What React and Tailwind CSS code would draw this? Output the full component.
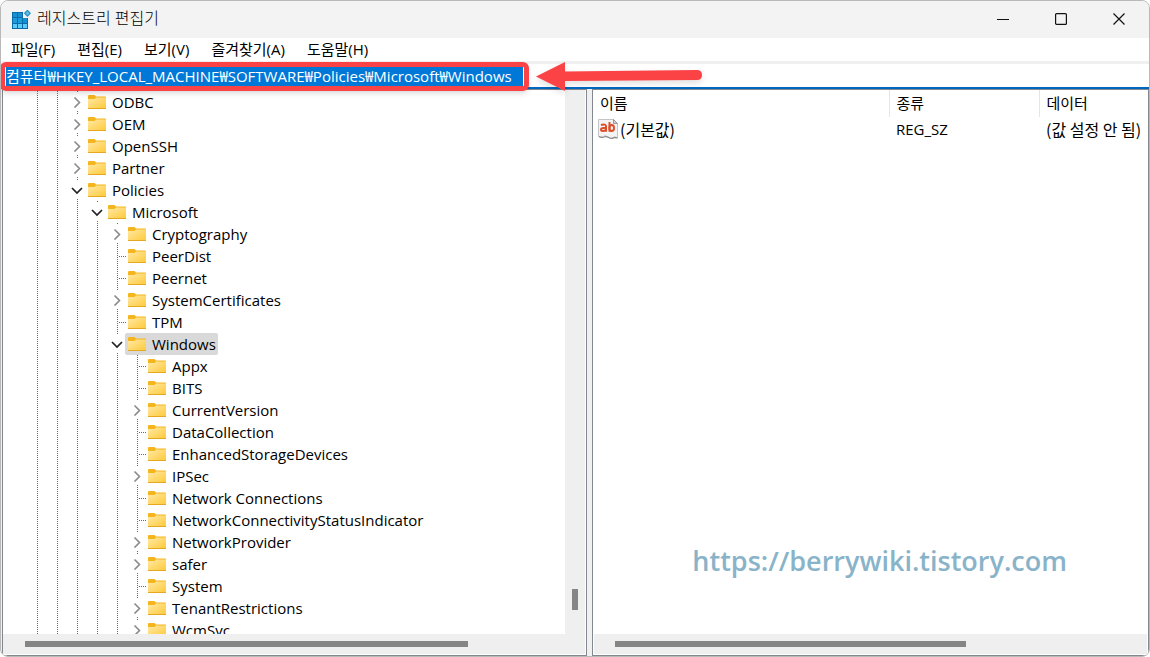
import { useState } from "react";

const MENUS = ["파일(F)", "편집(E)", "보기(V)", "즐겨찾기(A)", "도움말(H)"];

// depth = number of guide lines drawn left of the expander
const KEYS = [
  { name: "ODBC", depth: 2, state: "closed" },
  { name: "OEM", depth: 2, state: "closed" },
  { name: "OpenSSH", depth: 2, state: "closed" },
  { name: "Partner", depth: 2, state: "closed" },
  { name: "Policies", depth: 2, state: "open" },
  { name: "Microsoft", depth: 3, state: "open" },
  { name: "Cryptography", depth: 4, state: "closed" },
  { name: "PeerDist", depth: 4, state: "leaf" },
  { name: "Peernet", depth: 4, state: "leaf" },
  { name: "SystemCertificates", depth: 4, state: "closed" },
  { name: "TPM", depth: 4, state: "leaf" },
  { name: "Windows", depth: 4, state: "open" },
  { name: "Appx", depth: 5, state: "leaf" },
  { name: "BITS", depth: 5, state: "leaf" },
  { name: "CurrentVersion", depth: 5, state: "closed" },
  { name: "DataCollection", depth: 5, state: "leaf" },
  { name: "EnhancedStorageDevices", depth: 5, state: "leaf" },
  { name: "IPSec", depth: 5, state: "closed" },
  { name: "Network Connections", depth: 5, state: "leaf" },
  { name: "NetworkConnectivityStatusIndicator", depth: 5, state: "leaf" },
  { name: "NetworkProvider", depth: 5, state: "closed" },
  { name: "safer", depth: 5, state: "closed" },
  { name: "System", depth: 5, state: "leaf" },
  { name: "TenantRestrictions", depth: 5, state: "closed" },
  { name: "WcmSvc", depth: 5, state: "closed" },
];

function RegeditIcon() {
  return (
    <svg className="w-5 h-5" viewBox="0 0 20 20" aria-hidden="true">
      <path d="M1 2h11v6h5v11H1z" fill="#0b6aa8" />
      <path d="M2 3h4v4H2zM7 3h4v4H7z" fill="#1590d0" />
      <path d="M2 8h4v5H2zM7 8h4v5H7z" fill="#1c9cdc" />
      <path d="M12 8h4v5h-4z" fill="#1590d0" />
      <path d="M2 14h4v4H2zM7 14h4v4H7zM12 14h4v4h-4z" fill="#5ccbfa" />
      <path d="M16.500-.5l3.500 3.800-3.500 3.700-3.700-3.700z" fill="#2b8fc4" />
      <path d="M16.500 1.200l2 2-2 2-2-2z" fill="#5fbde6" />
    </svg>
  );
}

function FolderIcon() {
  return (
    <svg className="w-[18px] h-4 shrink-0" viewBox="0 0 18 16" aria-hidden="true">
      <defs>
        <linearGradient id="folder" x1="0" y1="0" x2="1" y2="1">
          <stop offset="0" stopColor="#ffe9a6" />
          <stop offset="1" stopColor="#ffca3a" />
        </linearGradient>
      </defs>
      <path d="M0 2Q0 1 1 1h5.500l1.500 1.500h9q1 0 1 1v2H0z" fill="#f5b51c" />
      <path d="M0 5h6.500L8 3.500h10v11H0z" fill="url(#folder)" />
      <path d="M0 14h18v1H0z" fill="#e5a822" />
    </svg>
  );
}

function StringValueIcon() {
  return (
    <svg className="w-5 h-5 shrink-0" viewBox="0 0 20 20" aria-hidden="true">
      <path
        d="M.5.500h15l4 4v14.500q-2.500-2-5 0t-5-1-4-.5-5 0z"
        fill="#f4f4f4"
        stroke="#c4c4c4"
      />
      <path d="M15.500.500v4h4z" fill="#d0d0d0" stroke="#9a9a9a" />
      <path d="M1 17.500q3 1.500 5 .5t5 .5 4 .5 4.500 0" fill="none" stroke="#8d8d8d" strokeWidth="1.300" />
      <g fill="none" stroke="#dd4f2b" strokeWidth="2">
        <path d="M3 6q5-1.500 5 1.500v5.300M8 9H5.500q-2.500 0-2.500 1.500T5 12q3 0 3-2" />
        <path d="M11.500 3v9.800" />
        <ellipse cx="13.700" cy="9" rx="2.300" ry="2.900" />
      </g>
    </svg>
  );
}

function Chevron({ open }) {
  return (
    <svg className="w-3 h-3" viewBox="0 0 12 12" fill="none" aria-hidden="true">
      {open ? (
        <path d="M1 4l5 5 5-5" stroke="#222" strokeWidth="1.700" />
      ) : (
        <path d="M3.500 1.500l5 5-5 5" stroke="#8a8a8a" strokeWidth="1.600" />
      )}
    </svg>
  );
}

function VLine({ className }) {
  return (
    <span
      className={`w-px bg-[linear-gradient(#6b6b6b_50%,transparent_50%)] bg-[length:1px_2px] ${className}`}
    />
  );
}

function Expander({ state }) {
  if (state === "leaf") {
    return (
      <span className="flex w-5 h-full items-center pl-[10px]">
        <VLine className="h-full" />
        <span className="h-px w-2 ml-px bg-[linear-gradient(90deg,#6b6b6b_50%,transparent_50%)] bg-[length:2px_1px]" />
      </span>
    );
  }
  return (
    <span className="flex flex-col w-5 h-full items-center justify-between">
      <VLine className="h-[2px]" />
      <Chevron open={state === "open"} />
      <VLine className="h-[2px]" />
    </span>
  );
}

function TreeRow({ item, selected, onSelect }) {
  return (
    <li className="flex h-[22px] pl-6">
      {Array.from({ length: item.depth }, (_, i) => (
        <span key={i} className="flex w-5 shrink-0 pl-[10px]">
          <VLine className="h-full" />
        </span>
      ))}
      <Expander state={item.state} />
      <button
        onClick={onSelect}
        className={`flex items-center gap-[6px] h-full -ml-[2px] pl-[3px] pr-[2px] rounded-xs whitespace-nowrap ${
          selected ? "bg-[#d9d9d9]" : ""
        }`}
      >
        <FolderIcon />
        {item.name}
      </button>
    </li>
  );
}

function CaptionButton({ label, children }) {
  return (
    <button aria-label={label} className="flex w-[58px] h-full items-center justify-center">
      <svg className="w-3 h-3" viewBox="0 0 12 12" fill="none" stroke="#111" strokeWidth="1.200">
        {children}
      </svg>
    </button>
  );
}

export default function App() {
  const [selected, setSelected] = useState("Windows");
  const [path, setPath] = useState(
    "컴퓨터₩HKEY_LOCAL_MACHINE₩SOFTWARE₩Policies₩Microsoft₩Windows"
  );

  return (
    <div className="flex flex-col h-screen overflow-hidden rounded-lg border border-[#b9b9b9] bg-[#f0f0f0] text-[15px] text-black font-['Open_Sans','Noto_Sans_CJK_KR',sans-serif]">
      {/* TITLE BAR */}
      <header className="flex h-[37px] shrink-0 items-center bg-[#f3f3f3] pl-[10px]">
        <RegeditIcon />
        <h1 className="ml-[6px] pb-1 text-base font-light">레지스트리 편집기</h1>
        <div className="ml-auto flex h-full pr-px pb-px">
          <CaptionButton label="최소화">
            <path d="M0 6.500h12" />
          </CaptionButton>
          <CaptionButton label="최대화">
            <rect x="0.600" y="0.600" width="10.800" height="10.800" rx="1" />
          </CaptionButton>
          <CaptionButton label="닫기">
            <path d="M.5.500l11 11M11.500.500l-11 11" />
          </CaptionButton>
        </div>
      </header>

      {/* MENU */}
      <nav className="flex h-[23px] shrink-0 items-center gap-[22px] bg-white pl-[10px]">
        {MENUS.map((m) => (
          <button key={m} className="whitespace-nowrap">
            {m}
          </button>
        ))}
      </nav>

      {/* ADDRESS BAR */}
      <div className="relative h-7 shrink-0 border-t-3 border-[#f0f0f0] bg-white">
        <div className="flex h-full items-center border-b-2 border-[#0067c0] pl-[5px] pt-px">
          <input
            aria-label="주소"
            value={path}
            onChange={(e) => setPath(e.target.value)}
            className="h-[19px] min-w-[517px] [field-sizing:content] bg-[#0078d7] text-white outline-none"
          />
        </div>
        {/* callout box and arrow over the address */}
        <div className="absolute -left-px -top-[2px] z-10 h-[29px] w-[529px] rounded-md border-5 border-[#fb4245] shadow-md pointer-events-none" />
        <svg
          className="absolute left-[533px] -top-[5px] z-10 h-10 w-[180px] drop-shadow-md pointer-events-none"
          viewBox="0 0 180 40"
          aria-hidden="true"
        >
          <path d="M2 17.500L31 3v9.500l132-1.500q5 0 5 5t-5 5l-132 1v10z" fill="#fb4245" />
        </svg>
      </div>

      <main className="flex min-h-0 grow">
        {/* KEY TREE */}
        <section className="ml-px flex w-[585px] shrink-0 flex-col border border-[#828790] bg-white pr-px pb-px">
          <div className="flex min-h-0 grow">
            <ul className="grow overflow-hidden pt-px">
              {KEYS.map((k) => (
                <TreeRow
                  key={k.name}
                  item={k}
                  selected={selected === k.name}
                  onSelect={() => setSelected(k.name)}
                />
              ))}
            </ul>
            <div className="flex w-5 flex-col items-center justify-end bg-[#efefef] pb-6">
              <div className="h-[21px] w-[6px] bg-[#858585]" />
            </div>
          </div>
          <div className="flex h-5 shrink-0 items-center bg-[#efefef] pl-[22px]">
            <div className="h-[6px] w-[443px] bg-[#858585]" />
          </div>
        </section>

        {/* VALUES */}
        <section className="relative ml-[5px] flex min-w-0 grow flex-col border border-[#828790] bg-white pl-px pr-px pb-px">
          <div className="min-h-0 grow overflow-hidden">
            <table className="w-full table-fixed text-left whitespace-nowrap">
              <thead>
                <tr className="h-[27px]">
                  <th className="w-[295px] border-r border-[#e5e5e5] pl-[6px] font-normal">이름</th>
                  <th className="w-[150px] border-r border-[#e5e5e5] pl-[7px] font-normal">종류</th>
                  <th className="pl-[7px] font-normal">데이터</th>
                </tr>
              </thead>
              <tbody>
                <tr className="h-6">
                  <td className="pl-1">
                    <span className="flex items-center gap-[2px] text-base font-['Noto_Sans_CJK_KR',sans-serif]">
                      <StringValueIcon />
                      (기본값)
                    </span>
                  </td>
                  <td className="pl-[7px]">REG_SZ</td>
                  <td className="pl-[7px] text-base font-['Noto_Sans_CJK_KR',sans-serif]">
                    (값 설정 안 됨)
                  </td>
                </tr>
              </tbody>
            </table>
          </div>
          <div className="flex h-5 shrink-0 items-center bg-[#efefef] pl-[21px]">
            <div className="h-[6px] w-[351px] bg-[#858585]" />
          </div>
          <a
            href="https://berrywiki.tistory.com"
            className="absolute bottom-[74px] right-[81px] text-[27px] leading-10 font-semibold text-[#89b3c9]"
          >
            https://berrywiki.tistory.com
          </a>
        </section>
      </main>
    </div>
  );
}
